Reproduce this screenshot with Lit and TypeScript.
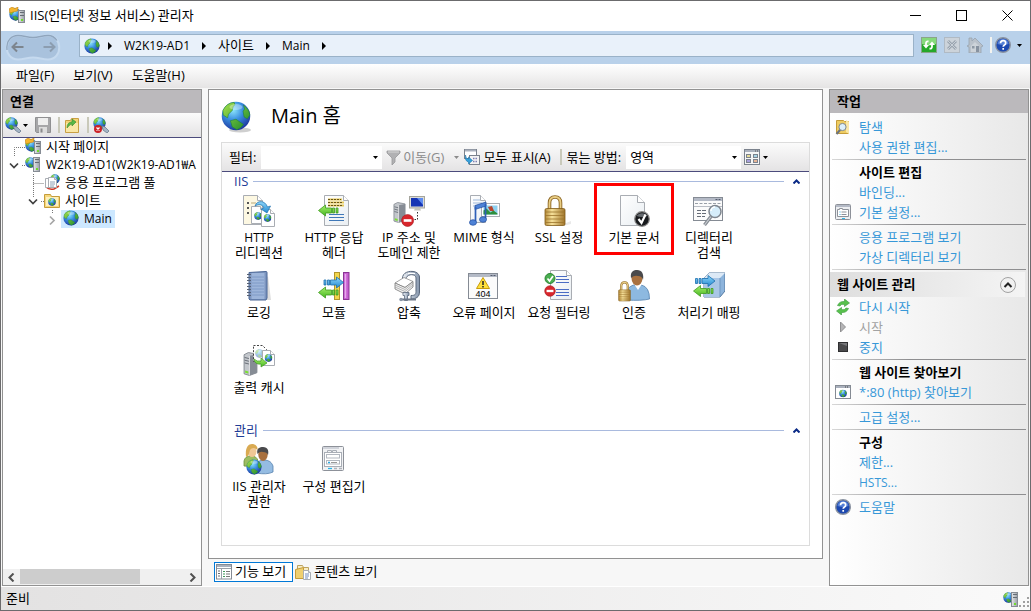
import { LitElement, html, svg, css, nothing } from "lit";
import { customElement, state } from "lit/decorators.js";

/* ---------- shared drawing helpers ---------- */

const globe = (x: number, y: number, s: number) => svg`<use href="#globe" x=${x} y=${y} width=${s} height=${s}></use>`;
const server = (x: number, y: number, w: number, h: number) => svg`<use href="#server" x=${x} y=${y} width=${w} height=${h}></use>`;
const tower = (x: number, y: number, w: number, h: number) => svg`
  <rect x=${x + 0.5} y=${y + 0.5} width=${w - 1} height=${h - 1} fill="url(#box)" stroke="#868c94"></rect>
  <path d="M${x + 2} ${y + 2.5}h${w - 3}M${x + 2} ${y + 5.5}h${w - 3}" stroke="#666c74"></path>
  <rect x=${x + w - 4} y=${y + h - 4} width="2" height="2" fill="#6fdc2a"></rect>`;
const page = (x: number, y: number, w: number, h: number, fill = "url(#paper)", fold = 5) => svg`
  <path d="M${x} ${y}h${w - fold}l${fold} ${fold}v${h - fold}h${-w}z" fill=${fill} stroke="#a9adb3" stroke-width="1"></path>
  <path d="M${x + w - fold} ${y}v${fold}h${fold}" fill="#fff" stroke="#a9adb3" stroke-width="1"></path>`;
const arrowLeft = (x: number, y: number) => svg`
  <path d="M${x} ${y}l7-5.500v3h6v5h-6v3zM${x + 14} ${y - 2.5}h2v5h-2zM${x + 17.5} ${y - 2.5}h2v5h-2z" fill="url(#green)" stroke="#3f9a1f" stroke-width=".8"></path>`;
const arrowRight = (x: number, y: number) => svg`
  <path d="M${x + 19.5} ${y}l-7-5.500v3h-6v5h6v3zM${x} ${y - 2.5}h2v5h-2zM${x + 3.5} ${y - 2.5}h2v5h-2z" fill="url(#blue)" stroke="#1c6fae" stroke-width=".8"></path>`;
const lock = (x: number, y: number, w: number, h: number) => svg`<use href="#lock" x=${x} y=${y} width=${w} height=${h}></use>`;
const noEntry = (x: number, y: number, r: number) => svg`
  <circle cx=${x} cy=${y} r=${r} fill="#d8262c" stroke="#a51a1e" stroke-width=".6"></circle>
  <rect x=${x - r * 0.65} y=${y - r * 0.22} width=${r * 1.3} height=${r * 0.44} fill="#fff"></rect>`;
const frame = (x: number, y: number, w: number, h: number) => svg`
  <rect x=${x} y=${y} width=${w} height=${h} fill="#fbfbfb" stroke="#858b94"></rect>
  <rect x=${x + 0.5} y=${y + 0.5} width=${w - 1} height="3" fill="#b4bac6"></rect>
  <path d="M${x + w - 4} ${y + 2}h2M${x + w - 7} ${y + 2}h2" stroke="#555c6e"></path>`;

const large: Record<string, unknown> = {
  redirect: svg`${page(0.5, 0.5, 19, 29, "#fdf8e2")}
    <path d="M4 8h2M4 13h2M4 18h2" stroke="#555" stroke-width="2"></path>
    <path d="M8 8h5M8 13h2" stroke="#b9a878"></path>
    ${page(8.5, 11.5, 12, 17, "#fff", 3)}${globe(11, 17, 8)}
    ${page(18.5, 14.5, 13, 17, "#fff", 4)}${globe(20.5, 19, 8)}
    <path d="M12 11c2-6 10-6 12.500 1l3-1-3.500 7-6-4 3-1c-2-4-5-4-9-2z" fill="url(#blue)" stroke="#1c6fae" stroke-width=".7"></path>`,
  response: svg`${page(6.5, 0.5, 24, 30)}
    <path d="M10 4.500h14M10 7.500h16M10 10.500h16" stroke="#e7c956" stroke-width="2"></path>
    <path d="M10 4.500h13M10 7.500h15M10 10.500h15" stroke="#6b5618" stroke-dasharray="2 1"></path>
    <path d="M11 19.500h15M11 22.500h15M11 25.500h15" stroke="#3f78b8" stroke-width="1.200"></path>${arrowLeft(0.5, 15.5)}`,
  ip: svg`${server(0, 7, 13, 21)}
    <rect x="16.500" y="1.500" width="15" height="11.500" fill="#dcdcd6" stroke="#a5a59d"></rect>
    <rect x="18" y="3" width="12" height="8.500" fill="#1534b4"></rect><path d="M24 3h6v7z" fill="#5f8cf0"></path>
    <path d="M22 13h5l1 2.500h-7z" fill="#c4c4bc"></path>
    <path d="M24.500 17v7.500h-4" fill="none" stroke="#333" stroke-dasharray="1.500 1.500"></path>${noEntry(14.6, 25.5, 6)}`,
  mime: svg`${page(2.5, 0.5, 15, 27)}<path d="M5 5h7M5 8h9M5 11h8" stroke="#9fb8da"></path>
    <rect x="13.500" y="8.500" width="18" height="13" fill="#fff" stroke="#a9adb3"></rect>
    <rect x="15.500" y="10.500" width="14" height="9" fill="#8ed0ef"></rect>
    <path d="M15.500 19.500v-4l3-2 4 4 3-2 4 3v1z" fill="#2e8f3c"></path><path d="M20 12l4-1 2 5h-4z" fill="#b8452c"></path>
    <path d="M7 10.500l11-3.500v4L7 14.500z" fill="#4e82d6" stroke="#1e4a9e" stroke-width=".7"></path>
    <path d="M7.500 12v15M17.500 9v15" stroke="#2d5fb8" stroke-width="1.700"></path>
    <ellipse cx="5" cy="27.500" rx="3.500" ry="2.800" fill="#4e82d6" stroke="#1e4a9e" stroke-width=".7"></ellipse>
    <ellipse cx="15" cy="24.500" rx="3.500" ry="2.800" fill="#4e82d6" stroke="#1e4a9e" stroke-width=".7"></ellipse>`,
  lock: svg`<path d="M16 31l12-5v3l-8 2z" fill="#e9e9e9"></path>${lock(1, 0, 22, 32)}`,
  document: svg`${page(2.5, 0.5, 24, 30, "url(#paper)", 7)}
    <circle cx="24" cy="24" r="7.300" fill="#17191c" stroke="#888" stroke-width="1.200"></circle>
    <path d="M18.500 21a6.500 6 0 0 1 11 0q-5.500 2-11 0z" fill="#666b70"></path>
    <path d="M20.500 24l3 4 4-8.500" fill="none" stroke="#fff" stroke-width="2.200"></path>`,
  directory: svg`${frame(0.5, 2.5, 29, 23)}
    <path d="M2 8.500h26" stroke="#9aa0a8" stroke-dasharray="3 1.500"></path><path d="M1 11.500h28" stroke="#b9bdc4"></path>
    <path d="M4 15.500h10M4 18.500h10M4 21.500h8" stroke="#666c76" stroke-dasharray="4 1"></path>
    <path d="M18 21.500l-6.500 8.500" stroke="#848a92" stroke-width="3.500"></path>
    <path d="M18 21.500l-6.500 8.500" stroke="#c9cdd2" stroke-width="1.200"></path>
    <circle cx="22" cy="16.500" r="6" fill="#d3ebfa" fill-opacity=".92" stroke="#7f868f" stroke-width="1.500"></circle>
    <path d="M18 16a4 4 0 0 1 4-4" fill="none" stroke="#fff" stroke-width="1.500"></path>`,
  logging: svg`<path d="M25 6l3 24H9z" fill="#dedede"></path>
    <path d="M6 2.500l17-1q1 0 1 1V28l-1 2H7l-1-1z" fill="#7c95bf" stroke="#4b6796"></path>
    <rect x="8.500" y="3" width="13" height="26" fill="#9db5da"></rect>
    <path d="M9 7h12M9 10h12M9 13h12M9 16h12M9 19h12M9 22h12M9 25h12" stroke="#7f9ac6"></path>
    <path d="M4 4.500h4M4 7.500h4M4 10.500h4M4 13.500h4M4 16.500h4M4 19.500h4M4 22.500h4M4 25.500h4" stroke="#566174" stroke-width="1.200"></path>`,
  modules: svg`<rect x="16.500" y="2.500" width="5" height="27" fill="#f3d64c" stroke="#b3952a"></rect>
    <rect x="25.500" y="2.500" width="5.500" height="27" fill="#c65fd0" stroke="#8a3594"></rect>
    <path d="M27.500 4v24" stroke="#e7a9ec" stroke-width="1.500"></path>${arrowRight(6, 12.5)}${arrowLeft(0.5, 22.5)}`,
  compress: svg`<path d="M9.500 8.500C9-.500 26-1 26.500 7v15c0 5-3.500 7-8.500 7v-3.500c4 0 5-1 5-4V8c0-4.500-9-4.500-10 .500z" fill="url(#steel)" stroke="#59677b"></path>
    <path d="M2 13l9-5.500 9 4-8 6z" fill="#fff" stroke="#8b8b8b" stroke-width=".8"></path>
    <path d="M2 13v6l10 5 8-7v-5.500l-8 6z" fill="#f2f2f2" stroke="#777" stroke-width=".8"></path>
    <path d="M2 15l10 4.500 8-6.500M2 17l10 4.500 8-6.500" fill="none" stroke="#999" stroke-width=".7"></path>
    <path d="M10 22.500h6v3h-1.500v5h-3v-5H10z" fill="url(#steel)" stroke="#59677b" stroke-width=".8"></path>
    <path d="M7 29.500h16" stroke="#6c7787" stroke-width="2"></path><circle cx="8" cy="29.500" r="1.700" fill="#8b95a5"></circle><path d="M15 3.500h7" stroke="#fff"></path>`,
  error: svg`${frame(0.5, 3.5, 29, 25)}
    <path d="M15 7.500l6.500 11h-13z" fill="#ffe03a" stroke="#c99b0a"></path><path d="M15 11v4M15 16v1.500" stroke="#222" stroke-width="1.500"></path>
    <text x="15" y="27" text-anchor="middle" class="code">404</text>`,
  filtering: svg`${page(7.5, 0.5, 21, 29)}
    <path d="M13 6.500h11M13 9.500h13M13 12.500h13M13 19.500h13M13 22.500h13M13 25.500h13" stroke="#4a6cc4" stroke-width="1.200"></path>
    <circle cx="7" cy="8.500" r="5" fill="#4aae50" stroke="#2c8434"></circle><path d="M4.500 8.500l2 2.500 3.500-5" fill="none" stroke="#fff" stroke-width="1.700"></path>${noEntry(7, 21, 5.3)}`,
  auth: svg`<path d="M8.500 30v-7q1-6 7-8h8q8 2 8 14-8 2-23 1z" fill="#8db9e0" stroke="#5482ad" stroke-width=".8"></path>
    <path d="M16 14l4 6 4-6z" fill="#fff"></path>
    <ellipse cx="19" cy="8" rx="5.500" ry="7.500" fill="#a9713f"></ellipse>
    <path d="M13 8C12 1 16 0 19 0c5 0 7 4 6 10q-1-4-5-4-4-1-7 2z" fill="#4a4a4c"></path>${lock(0, 11, 13, 21)}`,
  handler: svg`<path d="M11 8l5-5h16v18l-5 6H11z" fill="#8db4dc" stroke="#54789f"></path>
    <path d="M11 8h16v19H11z" fill="#a9c6e6"></path><path d="M11 8l5-5h16l-5 5z" fill="#dce9f6"></path><path d="M27 8v19" stroke="#6f97c2"></path>
    ${arrowRight(2.5, 11)}${arrowLeft(0.5, 21)}`,
  cache: svg`${server(0, 7, 15, 24)}
    <path d="M10.500.500h9l4 4v12h-13z" fill="#fff" stroke="#444" stroke-dasharray="2 1.500"></path><g opacity=".45">${globe(12, 4, 9)}</g>
    ${page(19.5, 5.5, 12, 15, "#fff", 4)}${globe(21.5, 9, 8)}
    <path d="M11 14q3 3 7 2v-3l6 5-6 4v-3q-6 1-7-5z" fill="url(#green)" stroke="#3f9a1f" stroke-width=".7"></path>`,
  users: svg`<path d="M1 22v-5q1-5 7-5t7 5v6z" fill="#9dbd62" stroke="#6b8f3a" stroke-width=".8"></path>
    <ellipse cx="9" cy="7.500" rx="4.500" ry="5.500" fill="#f0c795"></ellipse>
    <path d="M3 13C2 4 5 0 9 0c4 0 6 3 5.500 6-3-3-6-2-7.500 0-1 3-1 6-4 7z" fill="#d9aa52"></path>
    <path d="M13 29v-7q1-6 8-6t9 6v6q-6 3-17 1z" fill="#95bce2" stroke="#5480ad" stroke-width=".8"></path>
    <ellipse cx="20" cy="10.500" rx="4.700" ry="6.500" fill="#a8703e"></ellipse>
    <path d="M14.500 10C13 4 17 3 20 3c5 0 6 4 5 8q-1-3-5-3-3-1-5.500 2z" fill="#4a4a4c"></path>${globe(3, 15, 16)}`,
  config: svg`<rect x="4.500" y="2.500" width="21" height="24" rx="1" fill="#f1f2f4" stroke="#8d9199"></rect>
    <path d="M5 4h16" stroke="#c4c9d2" stroke-width="1.500"></path>
    <rect x="6.500" y="8.500" width="17" height="14" fill="#fff" stroke="#a9aeb6"></rect>
    <path d="M9.500 8V6.500h4V8M14.500 8V6.500h4V8" fill="none" stroke="#a9aeb6"></path>
    <rect x="8.500" y="10.500" width="13" height="3.500" fill="#fff" stroke="#b3b8c0"></rect>
    <rect x="8.500" y="16.500" width="13" height="3.500" fill="#fff" stroke="#b3b8c0"></rect><path d="M10 18.500h2" stroke="#2ea6dd" stroke-width="1.300"></path><path d="M13 18.500h6" stroke="#999"></path>
    <path d="M10 24.500h4" stroke="#2cb5e8" stroke-width="1.300"></path><path d="M16 24.500h3M21 24.500h3" stroke="#b0b4ba" stroke-width="1.300"></path>`,
};

const small: Record<string, unknown> = {
  globe: globe(0, 0, 16),
  app: svg`${globe(0, 1, 13)}<path d="M0 2l3-2 3 1.500L9 0l-.500 4L4 5 1 6z" fill="#f5b52e" stroke="#c07d10" stroke-width=".6"></path>${tower(9, 3, 7, 13)}`,
  host: svg`${globe(0, 1, 11)}${tower(8, 1, 7, 15)}`,
  pool: svg`${globe(6, 0, 10)}<path d="M2 13q3 3 8 2l5-3" fill="none" stroke="#cf3a2c" stroke-width="1.500"></path>${page(1.5, 4.5, 8, 9, "#fff", 2)}${page(4.5, 3.5, 8, 10, "#fff", 2)}<path d="M6 8h5M6 10h5M6 12h4" stroke="#7087a5" stroke-width=".8"></path>`,
  sites: svg`<path d="M.500 2.500h6l1 2h8v11H.500z" fill="#f6d77c" stroke="#c59c3a"></path><rect x="2" y="5" width="12" height="9" fill="#fdf0bd"></rect>${globe(4, 6, 8)}`,
  connect: svg`${globe(0, 0, 13)}<path d="M8 9l4 1 4 4-2 2-4-3z" fill="#a4b4c4" stroke="#6b7c8e" stroke-width=".8"></path>`,
  disconnect: svg`${globe(0, 0, 13)}<path d="M9 9l3 1 4 4-2 2-4-3z" fill="#a4b4c4" stroke="#6b7c8e" stroke-width=".8"></path><circle cx="5" cy="12" r="4" fill="#cc2127"></circle><path d="M3.500 10.500l3 3m0-3l-3 3" stroke="#fff" stroke-width="1.300"></path>`,
  save: svg`<path d="M.500.500h15v15h-14l-1-1z" fill="#a6a6a8" stroke="#909092"></path><rect x="3" y="1" width="10" height="7" fill="#eee"></rect><rect x="4" y="10" width="8" height="6" fill="#dcdcdc"></rect><path d="M5.500 11.500h2v4h-2z" fill="#8b8b8d"></path>`,
  up: svg`<path d="M1.500 3.500h5l1-2h7v14h-13z" fill="#f4d478" stroke="#c9a044"></path><path d="M2 6h12v9H2z" fill="#fae7a6"></path><path d="M3 11q0-6 5-6V2l4 3-4 4V7q-2 0-5 4z" fill="#59b947" stroke="#35882a" stroke-width=".6"></path>`,
  refresh: svg`<rect x=".500" y=".500" width="15" height="15" fill="#25a82a" stroke="#8aa58a"></rect><path d="M1 1h14v6q-7 3-14 0z" fill="#86d97c"></path>
    <path d="M7.500 4.500Q5 4 5 6.500v2" fill="none" stroke="#fff" stroke-width="1.800"></path><path d="M2 8h6l-3 3.500z" fill="#fff"></path>
    <path d="M8.500 11.500q2.500.500 2.500-2v-2" fill="none" stroke="#fff" stroke-width="1.800"></path><path d="M8 8h6l-3-3.500z" fill="#fff"></path>`,
  stop: svg`<rect x=".500" y=".500" width="15" height="15" fill="#ccd3da" stroke="#b0bac4"></rect><path d="M4 4l8 8m0-8l-8 8" stroke="#9aa4af" stroke-width="2.800"></path><path d="M4 4l8 8m0-8l-8 8" stroke="#c8d0d8" stroke-width="1"></path>`,
  home: svg`<path d="M2 8V1h3v3l3-3 8 8-2 1v6H2v-6L0 9z" fill="#b9c1ca" stroke="#98a3ae" stroke-width=".8"></path><path d="M4 9l4-4 4 4v6H4z" fill="#cdd3d9"></path><rect x="5" y="9" width="2.500" height="2.500" fill="#8e99a5"></rect><rect x="9" y="9" width="3" height="6" fill="#8792a0"></rect>`,
  help: svg`<circle cx="8" cy="8" r="7.300" fill="#1d49b0" stroke="#8b93a0" stroke-width="1.400"></circle><path d="M2.500 7a5.500 5 0 0 1 11 0q-5 2-11 0z" fill="#5580d6"></path><path d="M5.500 6.200q0-2.500 2.600-2.500t2.600 2.300q0 1.500-1.500 2.200-1 .600-1 1.600M8.200 11v1.800" fill="none" stroke="#fff" stroke-width="1.700"></path>`,
  funnel: svg`<path d="M1 2h13v2L9 9v4l-3 3V9L1 4z" fill="#b1b1b3" stroke="#98989a" stroke-width=".8"></path><path d="M2 3h11" stroke="#d8d8d8"></path>`,
  showall: svg`<rect x=".500" y=".500" width="12" height="9" fill="#fff" stroke="#7b828d"></rect><path d="M1 1.500h11" stroke="#aab1bd" stroke-width="2"></path><rect x="5.500" y="6.500" width="10" height="9" fill="#f3f3f3" stroke="#7b828d"></rect><path d="M9 9.500h5M9 12.500h5" stroke="#7f7fb4" stroke-width="1.500" stroke-dasharray="1.500 1"></path><path d="M1.500 6q0 4 3 4V8l4 3.500L4.500 15v-2q-4-1-3-7z" fill="#35a0dc" stroke="#1b73aa" stroke-width=".6"></path>`,
  view: svg`<rect x=".500" y=".500" width="15" height="15" fill="#f6f6f6" stroke="#7b828d"></rect><path d="M1 2h14" stroke="#aab1bd" stroke-width="2"></path><path d="M11 2h1m1 0h1" stroke="#555"></path><g stroke="#7b828d"><rect x="2.500" y="5.500" width="4" height="3" fill="#e6dc9a"></rect><rect x="9.500" y="5.500" width="4" height="3" fill="#a8d5e6"></rect><rect x="2.500" y="10.500" width="4" height="3" fill="#a9a0dd"></rect><rect x="9.500" y="10.500" width="4" height="3" fill="#e6b496"></rect></g>`,
  features: svg`<rect x=".500" y=".500" width="15" height="14.500" fill="#fff" stroke="#858b94"></rect><path d="M1 2h14" stroke="#aab1bd" stroke-width="2"></path><path d="M1 4.500h14M5.500 4v11" stroke="#999fa8"></path><path d="M2 7h2M2 9.500h2M2 12h2" stroke="#666c75"></path><path d="M7 7.500h2M7 10h2M7 12.500h2" stroke="#3f9a5a" stroke-width="1.200"></path><path d="M10 7.500h4M10 10h4M10 12.500h4" stroke="#777"></path>`,
  content: svg`<path d="M2.500 12V1.500h5l1 2h5V12z" fill="#f7ecc6" stroke="#bda360"></path><path d="M.500 5.500l8-2v11h-8z" fill="#efcf70" stroke="#c59c3a"></path>${page(8.5, 6.5, 7, 9, "#fff", 2)}<path d="M10 10h4M10 12h4M10 14h3" stroke="#4f6fae" stroke-width=".8"></path>`,
  explore: svg`<path d="M1.500 1.500h7l1 1h4v12h-12z" fill="#efcd62" stroke="#c59c3a"></path><path d="M11 1l3 2v12l-3-2z" fill="#fae7a6"></path><path d="M5.500 10.500L1.500 15" stroke="#6d747e" stroke-width="2.200"></path><circle cx="7.500" cy="8" r="3.600" fill="#dceffa" stroke="#7e8891"></circle>`,
  settings: svg`<rect x=".500" y=".500" width="15" height="15" rx="1" fill="#eceef1" stroke="#8d9199"></rect><path d="M1 2h14" stroke="#b4bac6" stroke-width="2"></path><path d="M2.500 5.500h2v-1h3v1h6v7h-11z" fill="#fff" stroke="#8d9199"></path><path d="M4.500 8h1M4.500 10.500h1" stroke="#2ea6dd"></path><path d="M6.500 8h5M6.500 10.500h5" stroke="#8d9199"></path><path d="M7 14.500h3" stroke="#2cb5e8"></path>`,
  restart: svg`<path d="M2.500 6.500q2-4.500 7-4V0l5 4-5 3.500V5.500Q6 4.500 5 7zM13.500 9.500q-2 4.500-7 4V16l-5-4 5-3.500v2Q10 11.500 11 9z" fill="#58c14c" stroke="#37993a" stroke-width=".6"></path>`,
  start: svg`<path d="M5.500 3l5 5-5 5z" fill="#b4b4b6" stroke="#8f8f91"></path>`,
  halt: svg`<rect x="3.500" y="3.500" width="9" height="9" fill="#4a4a4c" stroke="#2f2f31"></rect><path d="M4 4h8v3z" fill="#77777a"></path>`,
  browse: svg`<rect x=".500" y="1.500" width="15" height="13" fill="#fff" stroke="#858b94"></rect><path d="M1 3h14" stroke="#aab1bd" stroke-width="2"></path><path d="M10 3h1m1 0h1" stroke="#444"></path>${globe(4, 5.5, 8)}`,
};

const icon16 = (name: string) => html`<svg class="i16" viewBox="0 0 16 16" aria-hidden="true">${small[name]}</svg>`;
const icon32 = (name: string) => html`<svg class="i32" viewBox="0 0 32 32" aria-hidden="true">${large[name]}</svg>`;
const down = () => html`<svg class="down" viewBox="0 0 5 3" aria-hidden="true"><path d="M0 0h5L2.500 3z" fill="currentColor"></path></svg>`;
const next = () => html`<svg class="next" viewBox="0 0 4 8" aria-hidden="true"><path d="M0 0l4 4-4 4z"></path></svg>`;
const isLatin = (text: string) => /^[A-Z.]+$/.test(text);

const defs = html`<svg class="defs" aria-hidden="true">
  <defs>
    <radialGradient id="sea" cx=".4" cy=".3" r=".75"><stop offset="0" stop-color="#8ce4fb"></stop><stop offset=".45" stop-color="#3a8fe0"></stop><stop offset="1" stop-color="#1b2f9a"></stop></radialGradient>
    <linearGradient id="land" x1="0" y1="0" x2="1" y2="1"><stop offset="0" stop-color="#a5e04a"></stop><stop offset="1" stop-color="#16862c"></stop></linearGradient>
    <linearGradient id="paper" x1="0" y1="0" x2="1" y2="1"><stop offset="0" stop-color="#fff"></stop><stop offset="1" stop-color="#e9eef2"></stop></linearGradient>
    <linearGradient id="green" x1="0" y1="0" x2="0" y2="1"><stop offset="0" stop-color="#a8ee6c"></stop><stop offset="1" stop-color="#46b822"></stop></linearGradient>
    <linearGradient id="blue" x1="0" y1="0" x2="0" y2="1"><stop offset="0" stop-color="#8fd6fa"></stop><stop offset="1" stop-color="#2289d0"></stop></linearGradient>
    <linearGradient id="brass" x1="0" y1="0" x2="1" y2="0"><stop offset="0" stop-color="#b48a38"></stop><stop offset=".35" stop-color="#f7e19a"></stop><stop offset="1" stop-color="#a0742a"></stop></linearGradient>
    <linearGradient id="steel" x1="0" y1="0" x2="1" y2="0"><stop offset="0" stop-color="#eef2f7"></stop><stop offset="1" stop-color="#8797ad"></stop></linearGradient>
    <linearGradient id="box" x1="0" y1="0" x2="1" y2="0"><stop offset="0" stop-color="#e6e8ea"></stop><stop offset="1" stop-color="#9aa0a8"></stop></linearGradient>
  </defs>
  <symbol id="globe" viewBox="0 0 16 16">
    <circle cx="8" cy="8" r="7.600" fill="url(#sea)"></circle>
    <path d="M1 5Q3 1 7 .700q1 1.300-.500 2.300L6 5 4 7 3.500 9 1.200 7.500zM12 2.200q3 2 3.400 5.300l-1.400 2-1.700-1-.500-3 .800-1.300zM5 10.500l3-.800 2.500 1.800 1.500 1-1.500 1.700-2 1.100-2.500-1.500z" fill="url(#land)" stroke="#1d7f34" stroke-width=".3"></path>
    <ellipse cx="8" cy="3.200" rx="3.500" ry="1.600" fill="#fff" opacity=".35"></ellipse>
  </symbol>
  <symbol id="server" viewBox="0 0 14 22" preserveAspectRatio="none">
    <path d="M1 2.500l4-2L13 2v17l-7 2.500L1 20z" fill="#c3c7cc" stroke="#7c828a" stroke-width=".8"></path>
    <path d="M6 3.500L13 2v17l-7 2.500z" fill="#868c95"></path><path d="M6 3.500v18" stroke="#f4f4f4" stroke-width=".7"></path>
    <path d="M1.500 5l4 1M1.500 7.500l4 1M1.500 10l4 1" stroke="#5a6069" stroke-width=".8"></path>
    <path d="M2 17l3 .800v2l-3-.800z" fill="#7be034"></path>
  </symbol>
  <symbol id="lock" viewBox="0 0 22 32" preserveAspectRatio="none">
    <path d="M5.500 15V8q0-6 5.500-6T16.500 8v7" fill="none" stroke="#8d6724" stroke-width="3.600"></path>
    <path d="M5.500 15V8q0-6 5.500-6T16.500 8v7" fill="none" stroke="#e9cd83" stroke-width="1.800"></path>
    <rect x="1" y="13.500" width="20" height="17" rx="1.500" fill="url(#brass)" stroke="#805a18" stroke-width=".8"></rect>
    <path d="M1.500 17h19M1.500 20.500h19M1.500 24h19M1.500 27.500h19" stroke="#9a732c" stroke-width=".8"></path>
  </symbol>
</svg>`;

/* ---------- data ---------- */

type Feature = { icon: string; label: string[]; marked?: boolean };
const groups: { name: string; items: Feature[] }[] = [
  {
    name: "IIS",
    items: [
      { icon: "redirect", label: ["HTTP", "리디렉션"] },
      { icon: "response", label: ["HTTP 응답", "헤더"] },
      { icon: "ip", label: ["IP 주소 및", "도메인 제한"] },
      { icon: "mime", label: ["MIME 형식"] },
      { icon: "lock", label: ["SSL 설정"] },
      { icon: "document", label: ["기본 문서"], marked: true },
      { icon: "directory", label: ["디렉터리", "검색"] },
      { icon: "logging", label: ["로깅"] },
      { icon: "modules", label: ["모듈"] },
      { icon: "compress", label: ["압축"] },
      { icon: "error", label: ["오류 페이지"] },
      { icon: "filtering", label: ["요청 필터링"] },
      { icon: "auth", label: ["인증"] },
      { icon: "handler", label: ["처리기 매핑"] },
      { icon: "cache", label: ["출력 캐시"] },
    ],
  },
  {
    name: "관리",
    items: [
      { icon: "users", label: ["IIS 관리자", "권한"] },
      { icon: "config", label: ["구성 편집기"] },
    ],
  },
];

type Action = { text: string; icon?: string; kind?: "title" | "off" };
const siteActions: Action[][] = [
  [{ text: "탐색", icon: "explore" }, { text: "사용 권한 편집..." }],
  [{ text: "사이트 편집", kind: "title" }, { text: "바인딩..." }, { text: "기본 설정...", icon: "settings" }],
  [{ text: "응용 프로그램 보기" }, { text: "가상 디렉터리 보기" }],
];
const manageActions: Action[][] = [
  [{ text: "다시 시작", icon: "restart" }, { text: "시작", icon: "start", kind: "off" }, { text: "중지", icon: "halt" }],
  [{ text: "웹 사이트 찾아보기", kind: "title" }, { text: "*:80 (http) 찾아보기", icon: "browse" }],
  [{ text: "고급 설정..." }],
  [{ text: "구성", kind: "title" }, { text: "제한..." }, { text: "HSTS..." }],
  [{ text: "도움말", icon: "help" }],
];

const openMark = svg`<path d="M10 7.500l4 4 4-4" fill="none" stroke="#404040" stroke-width="1.700"></path>`;
const tree = [
  { icon: "app", text: "시작 페이지", depth: 1, lines: svg`<path class="dots" d="M14.500 18V9.500H25"></path>` },
  { icon: "host", text: "W2K19-AD1(W2K19-AD1₩A", depth: 1, latin: true, lines: svg`${openMark}<path class="dots" d="M22 9.500h3"></path>` },
  { icon: "pool", text: "응용 프로그램 풀", depth: 2, lines: svg`<path class="dots" d="M33.500 0v18M33.500 9.500H44"></path>` },
  { icon: "sites", text: "사이트", depth: 2, lines: svg`<g transform="translate(19)">${openMark}</g><path class="dots" d="M33.500 0v5M41 9.500h3"></path>` },
  { icon: "globe", text: "Main", depth: 3, latin: true, selected: true, lines: svg`<path d="M50 6.500l4 4-4 4" fill="none" stroke="#a6a6a6" stroke-width="1.700"></path><path class="dots" d="M52.500 0v3"></path>` },
];

/* ---------- component ---------- */

@customElement("app-root")
export class AppRoot extends LitElement {
  @state() private closed: Record<string, boolean> = {};

  static styles = css`
    :host {
      display: flex;
      flex-direction: column;
      box-sizing: border-box;
      min-height: 100vh;
      border: 1px solid #6b6b6d;
      background: #f7f7f7;
      color: #000;
      font: 13px/15px "Open Sans", "Noto Sans CJK KR", sans-serif;
      overflow: hidden;
    }
    * { box-sizing: border-box; }
    button, input, select {
      font: inherit;
      color: inherit;
      border: 0;
      margin: 0;
      padding: 0;
      background: none;
      border-radius: 0;
    }
    h1, h2, h3, p, ul { margin: 0; padding: 0; font: inherit; }
    ul { list-style: none; }
    svg { display: block; flex: none; }
    .defs { width: 0; height: 0; }
    .i16 { width: 16px; height: 16px; }
    .i32 { width: 32px; height: 32px; }
    .down { width: 5px; height: 3px; }
    .next { width: 4px; height: 8px; }
    .latin { font-size: 12px; }
    .code { font: 9px "Liberation Sans", sans-serif; }
    .dots { fill: none; stroke: #777; stroke-dasharray: 1 1; }
    .sep { width: 2px; height: 16px; background: #c9c9ba; }
    .grow { flex: 1; }

    .titlebar { display: flex; align-items: center; height: 30px; padding: 0 0 2px 8px; background: #fff; }
    .titlebar .i16 { margin-right: 5px; }
    .winbtn { display: flex; justify-content: center; width: 46px; }
    .winbtn svg { width: 11px; height: 11px; fill: none; stroke: #000; }

    .address { display: flex; align-items: center; height: 33px; padding: 0 8px 0 4px; background: #b9d1ea; }
    .nav { display: flex; }
    .path {
      flex: 1; display: flex; align-items: center; gap: 12px; height: 23px; margin: 0 7px 4px 18px;
      padding-left: 4px; border: 1px solid #9ab2c8; background: #e9f1fa;
    }
    .path .i16 { margin-right: -4px; }
    .tools { display: flex; align-items: center; gap: 7px; margin-bottom: 5px; }
    .tools .sep { background: #f4f4f0; margin-right: -4px; }
    .tools .helpbtn { display: flex; align-items: center; gap: 6px; }

    .menu {
      display: flex; align-items: center; gap: 19px; height: 25px; padding: 0 0 2px 15px;
      background: linear-gradient(#fff, #e5e4e4); border-bottom: 1px solid #f7f7f7;
    }

    .main { flex: 1; display: grid; grid-template-columns: 200px minmax(0, 1fr) 200px; gap: 6px; padding: 0 1px; }
    .panel { display: flex; flex-direction: column; border: 1px solid #929292; background: #fff; min-width: 0; }
    .caption { height: 23px; padding: 4px 7px; background: #bbb9bc; font-weight: 600; }
    .bar { display: flex; align-items: center; background: linear-gradient(#fbfbfb, #e4e3e4); border-bottom: 1px solid #4b4b7c; }
    .conn-tools { height: 25px; padding-left: 2px; }
    .conn-tools button { display: flex; align-items: center; gap: 2px; }
    .conn-tools .save { margin-left: 7px; }
    .conn-tools .sep { margin: 0 4px 0 7px; }

    .tree { flex: 1; }
    .node { display: flex; align-items: center; height: 18px; white-space: nowrap; overflow: hidden; }
    .gutter { height: 18px; }
    .depth1 .gutter { width: 22px; }
    .depth2 .gutter { width: 41px; }
    .depth3 .gutter { width: 58px; }
    .entry { display: flex; align-items: center; gap: 5px; height: 18px; padding-bottom: 2px; color: inherit; text-decoration: none; }
    .selected .entry { padding: 0 3px 2px 2px; background: #cde8ff; }
    .hscroll { display: flex; align-items: center; height: 16px; padding: 0 5px; gap: 5px; background: #f0f0f0; }
    .hscroll svg { width: 7px; height: 9px; fill: none; stroke: #505050; stroke-width: 2; }
    .track { flex: 1; height: 16px; }
    .thumb { width: 73%; height: 15px; background: #cdcdcd; }

    .center { display: flex; flex-direction: column; min-width: 0; }
    .home { flex: 1; padding: 0 12px 12px; }
    .heading { display: flex; align-items: center; gap: 18px; height: 52px; padding-top: 2px; }
    .heading svg { width: 32px; height: 32px; }
    .heading h1 { font-size: 20px; line-height: 26px; padding-bottom: 3px; }
    .box { flex: 1; display: flex; flex-direction: column; border: 1px solid #dcdcdc; }
    .filter { height: 29px; padding-left: 7px; white-space: nowrap; }
    .filter button { display: flex; align-items: center; gap: 3px; }
    .filter .go { color: #8b8b8b; gap: 1px; margin: 0 5px 0 4px; }
    .filter .go .down { margin-left: 9px; }
    .filter .sep { margin: 0 5px 0 9px; }
    .filter .views { gap: 3px; margin-left: 3px; }
    .combo { position: relative; height: 23px; margin-left: 5px; background: #fff; }
    .combo input, .combo select { width: 100%; height: 23px; padding: 0 4px; appearance: none; outline: 0; }
    .combo .down { position: absolute; right: 4px; top: 10px; pointer-events: none; }
    .wide { width: 121px; }
    .medium { width: 115px; }
    .group { display: flex; align-items: center; gap: 5px; width: 100%; height: 20px; padding: 0 9px 1px 12px; color: #1e3c96; }
    .rule { flex: 1; height: 1px; margin-right: 4px; background: #a9bade; }
    .group svg { width: 7px; height: 5px; fill: none; stroke: #0a2a86; stroke-width: 2; }
    .grid { display: grid; grid-template-columns: repeat(auto-fill, 75px); grid-auto-rows: 75px; padding: 3px 0 1px; }
    .feature { position: relative; display: flex; flex-direction: column; align-items: center; gap: 3px; padding-right: 1px; text-align: center; white-space: nowrap; }
    .feature .line { display: block; }
    .marked::after { content: ""; position: absolute; inset: -12px -2px 15px -3px; border: 3px solid #f00; }
    .tabs { display: flex; align-items: center; gap: 1px; height: 27px; padding: 0 0 2px 6px; }
    .tab { display: flex; align-items: center; gap: 3px; height: 20px; padding: 0 6px 0 1px; border: 1px solid transparent; }
    .tab + .tab { padding-left: 0; }
    .tab.on { border-color: #0078d7; background: #fff; }

    .actions { background: linear-gradient(90deg, #fff, #e8e8e8); }
    .list { padding-top: 4px; }
    .act { display: grid; grid-template-columns: 16px 1fr; gap: 8px; align-items: center; height: 20px; padding-left: 5px; white-space: nowrap; }
    .act a { color: #3798d8; text-decoration: none; grid-column: 2; }
    .act svg + a { grid-column: auto; }
    .act.title h3 { grid-column: 2; font-weight: 700; }
    .act .offbtn { color: #a2a2a2; justify-self: start; }
    .divide { height: 1px; margin: 2px; background: linear-gradient(90deg, #d8d8d8, #8e8e90 40%); }
    .section { display: flex; align-items: center; justify-content: space-between; height: 25px; margin-right: 3px; padding: 0 9px 0 7px; background: linear-gradient(90deg, #dedede, #f4f4f4); font-weight: 700; }
    .section svg { width: 16px; height: 16px; }

    .status { display: flex; align-items: center; height: 24px; padding: 0 0 0 5px; border-top: 1px solid #fff; background: linear-gradient(90deg, #e3e2e2, #fafafa); }
    .grip { width: 11px; height: 11px; fill: #a0a0a0; align-self: flex-end; margin-bottom: 2px; }
  `;

  private toggle(name: string) {
    this.closed = { ...this.closed, [name]: !this.closed[name] };
  }

  private action(a: Action) {
    if (a.kind === "title") return html`<div class="act title"><h3>${a.text}</h3></div>`;
    return html`<div class="act">
      ${a.icon ? icon16(a.icon) : nothing}
      ${a.kind === "off" ? html`<button class="offbtn" disabled>${a.text}</button>` : html`<a class=${isLatin(a.text) ? "latin" : ""} href="#">${a.text}</a>`}
    </div>`;
  }

  private actionList(blocks: Action[][], closing: boolean) {
    return blocks.map((b, i) => html`${b.map((a) => this.action(a))}${closing || i < blocks.length - 1 ? html`<div class="divide"></div>` : nothing}`);
  }

  render() {
    return html`
      ${defs}
      <header class="titlebar">
        ${icon16("app")}<span>IIS(인터넷 정보 서비스) 관리자</span><span class="grow"></span>
        <button class="winbtn" aria-label="최소화"><svg viewBox="0 0 11 11"><path d="M0 5.500h11"></path></svg></button>
        <button class="winbtn" aria-label="최대화"><svg viewBox="0 0 11 11"><rect x=".500" y=".500" width="10" height="10"></rect></svg></button>
        <button class="winbtn" aria-label="닫기"><svg viewBox="0 0 11 11"><path d="M.500.500l10 10m0-10l-10 10"></path></svg></button>
      </header>

      <div class="address">
        <button class="nav" aria-label="뒤로 / 앞으로">
          <svg width="56" height="28" viewBox="0 0 56 28">
            <path d="M13 1.500c6 0 9 2 15 2s9-2 15-2c15 0 15 24 0 24-6 0-9-2-15-2s-9 2-15 2c-15 0-15-24 0-24z" fill="#a9c2dd" stroke="#c6daef" stroke-width="2"></path>
            <path d="M2 16C1 6 7 1.500 13 1.500c6 0 9 2 15 2s9-2 15-2c4 0 7 2 9 5" fill="none" stroke="#8fa5bd" stroke-width="1.300"></path>
            <path d="M18.500 13H7.500m4.500-4.500L7.500 13l4.500 4.500" fill="none" stroke="#7d858e" stroke-width="2"></path>
            <path d="M38.500 13h11m-4.500-4.500l4.500 4.500-4.500 4.500" fill="none" stroke="#8c9db0" stroke-width="2"></path>
          </svg>
        </button>
        <nav class="path" aria-label="경로">
          ${icon16("globe")}${next()}<span class="latin">W2K19-AD1</span>${next()}<span>사이트</span>${next()}<span class="latin">Main</span>${next()}
        </nav>
        <div class="tools">
          <button aria-label="새로 고침">${icon16("refresh")}</button>
          <button aria-label="중지">${icon16("stop")}</button>
          <button aria-label="홈">${icon16("home")}</button>
          <span class="sep"></span>
          <button class="helpbtn" aria-label="도움말">${icon16("help")}${down()}</button>
        </div>
      </div>

      <nav class="menu"><button>파일(F)</button><button>보기(V)</button><button>도움말(H)</button></nav>

      <div class="main">
        <aside class="panel">
          <h2 class="caption">연결</h2>
          <div class="bar conn-tools">
            <button aria-label="연결 만들기">${icon16("connect")}${down()}</button>
            <button class="save" aria-label="저장">${icon16("save")}</button><span class="sep"></span>
            <button aria-label="위로">${icon16("up")}</button><span class="sep"></span>
            <button aria-label="연결 끊기">${icon16("disconnect")}</button>
          </div>
          <ul class="tree">
            ${tree.map((n) => {
              const w = [0, 22, 41, 58][n.depth];
              return html`<li class="node depth${n.depth} ${n.selected ? "selected" : ""}">
                <svg class="gutter" viewBox="3 0 ${w} 18">${n.lines}</svg>
                <a class="entry" href="#">${icon16(n.icon)}<span class=${n.latin ? "latin" : ""}>${n.text}</span></a>
              </li>`;
            })}
          </ul>
          <div class="hscroll" aria-hidden="true">
            <svg viewBox="0 0 7 9"><path d="M5.500.500l-4 4 4 4"></path></svg>
            <div class="track"><div class="thumb"></div></div>
            <svg viewBox="0 0 7 9"><path d="M1.500.500l4 4-4 4"></path></svg>
          </div>
        </aside>

        <div class="center">
          <main class="panel home">
            <div class="heading"><svg viewBox="0 0 32 32" aria-hidden="true"><ellipse cx="19" cy="29" rx="11" ry="2.500" fill="#cfcfcf"></ellipse>${globe(0, 0, 30)}</svg><h1>Main 홈</h1></div>
            <div class="box">
              <div class="bar filter">
                <label for="filter">필터:</label>
                <span class="combo wide"><input id="filter" type="text" />${down()}</span>
                <button class="go" disabled>${icon16("funnel")}<span>이동(G)</span>${down()}</button>
                <button>${icon16("showall")}<span>모두 표시(A)</span></button>
                <span class="sep"></span>
                <label for="groupby">묶는 방법:</label>
                <span class="combo medium"><select id="groupby"><option>영역</option></select>${down()}</span>
                <button class="views" aria-label="보기">${icon16("view")}${down()}</button>
              </div>
              ${groups.map(
                (g) => html`
                  <button class="group" @click=${() => this.toggle(g.name)}>
                    <span>${g.name}</span><span class="rule"></span><svg viewBox="0 0 7 5"><path d="M.500 4.500l3-3 3 3"></path></svg>
                  </button>
                  ${this.closed[g.name]
                    ? nothing
                    : html`<div class="grid">
                        ${g.items.map((f) => html`<button class="feature ${f.marked ? "marked" : ""}">${icon32(f.icon)}<span>${f.label.map((l) => html`<span class="line ${isLatin(l) ? "latin" : ""}">${l}</span>`)}</span></button>`)}
                      </div>`}
                `,
              )}
            </div>
          </main>
          <div class="tabs">
            <button class="tab on">${icon16("features")}<span>기능 보기</span></button>
            <button class="tab">${icon16("content")}<span>콘텐츠 보기</span></button>
          </div>
        </div>

        <aside class="panel actions">
          <h2 class="caption">작업</h2>
          <div class="list">${this.actionList(siteActions, true)}</div>
          <div class="section">
            <h2>웹 사이트 관리</h2>
            <button aria-label="접기"><svg viewBox="0 0 16 16"><circle cx="8" cy="8" r="7.500" fill="#f1f1f1" stroke="#a2a2a2"></circle><path d="M4.500 10L8 6.500l3.500 3.500" fill="none" stroke="#222" stroke-width="2"></path></svg></button>
          </div>
          ${this.actionList(manageActions, false)}
        </aside>
      </div>

      <footer class="status">
        <span>준비</span><span class="grow"></span>${icon16("host")}
        <svg class="grip" viewBox="0 0 11 11"><path d="M8 0h2v2H8zM4 4h2v2H4zM8 4h2v2H8zM0 8h2v2H0zM4 8h2v2H4zM8 8h2v2H8z"></path></svg>
      </footer>
    `;
  }
}
